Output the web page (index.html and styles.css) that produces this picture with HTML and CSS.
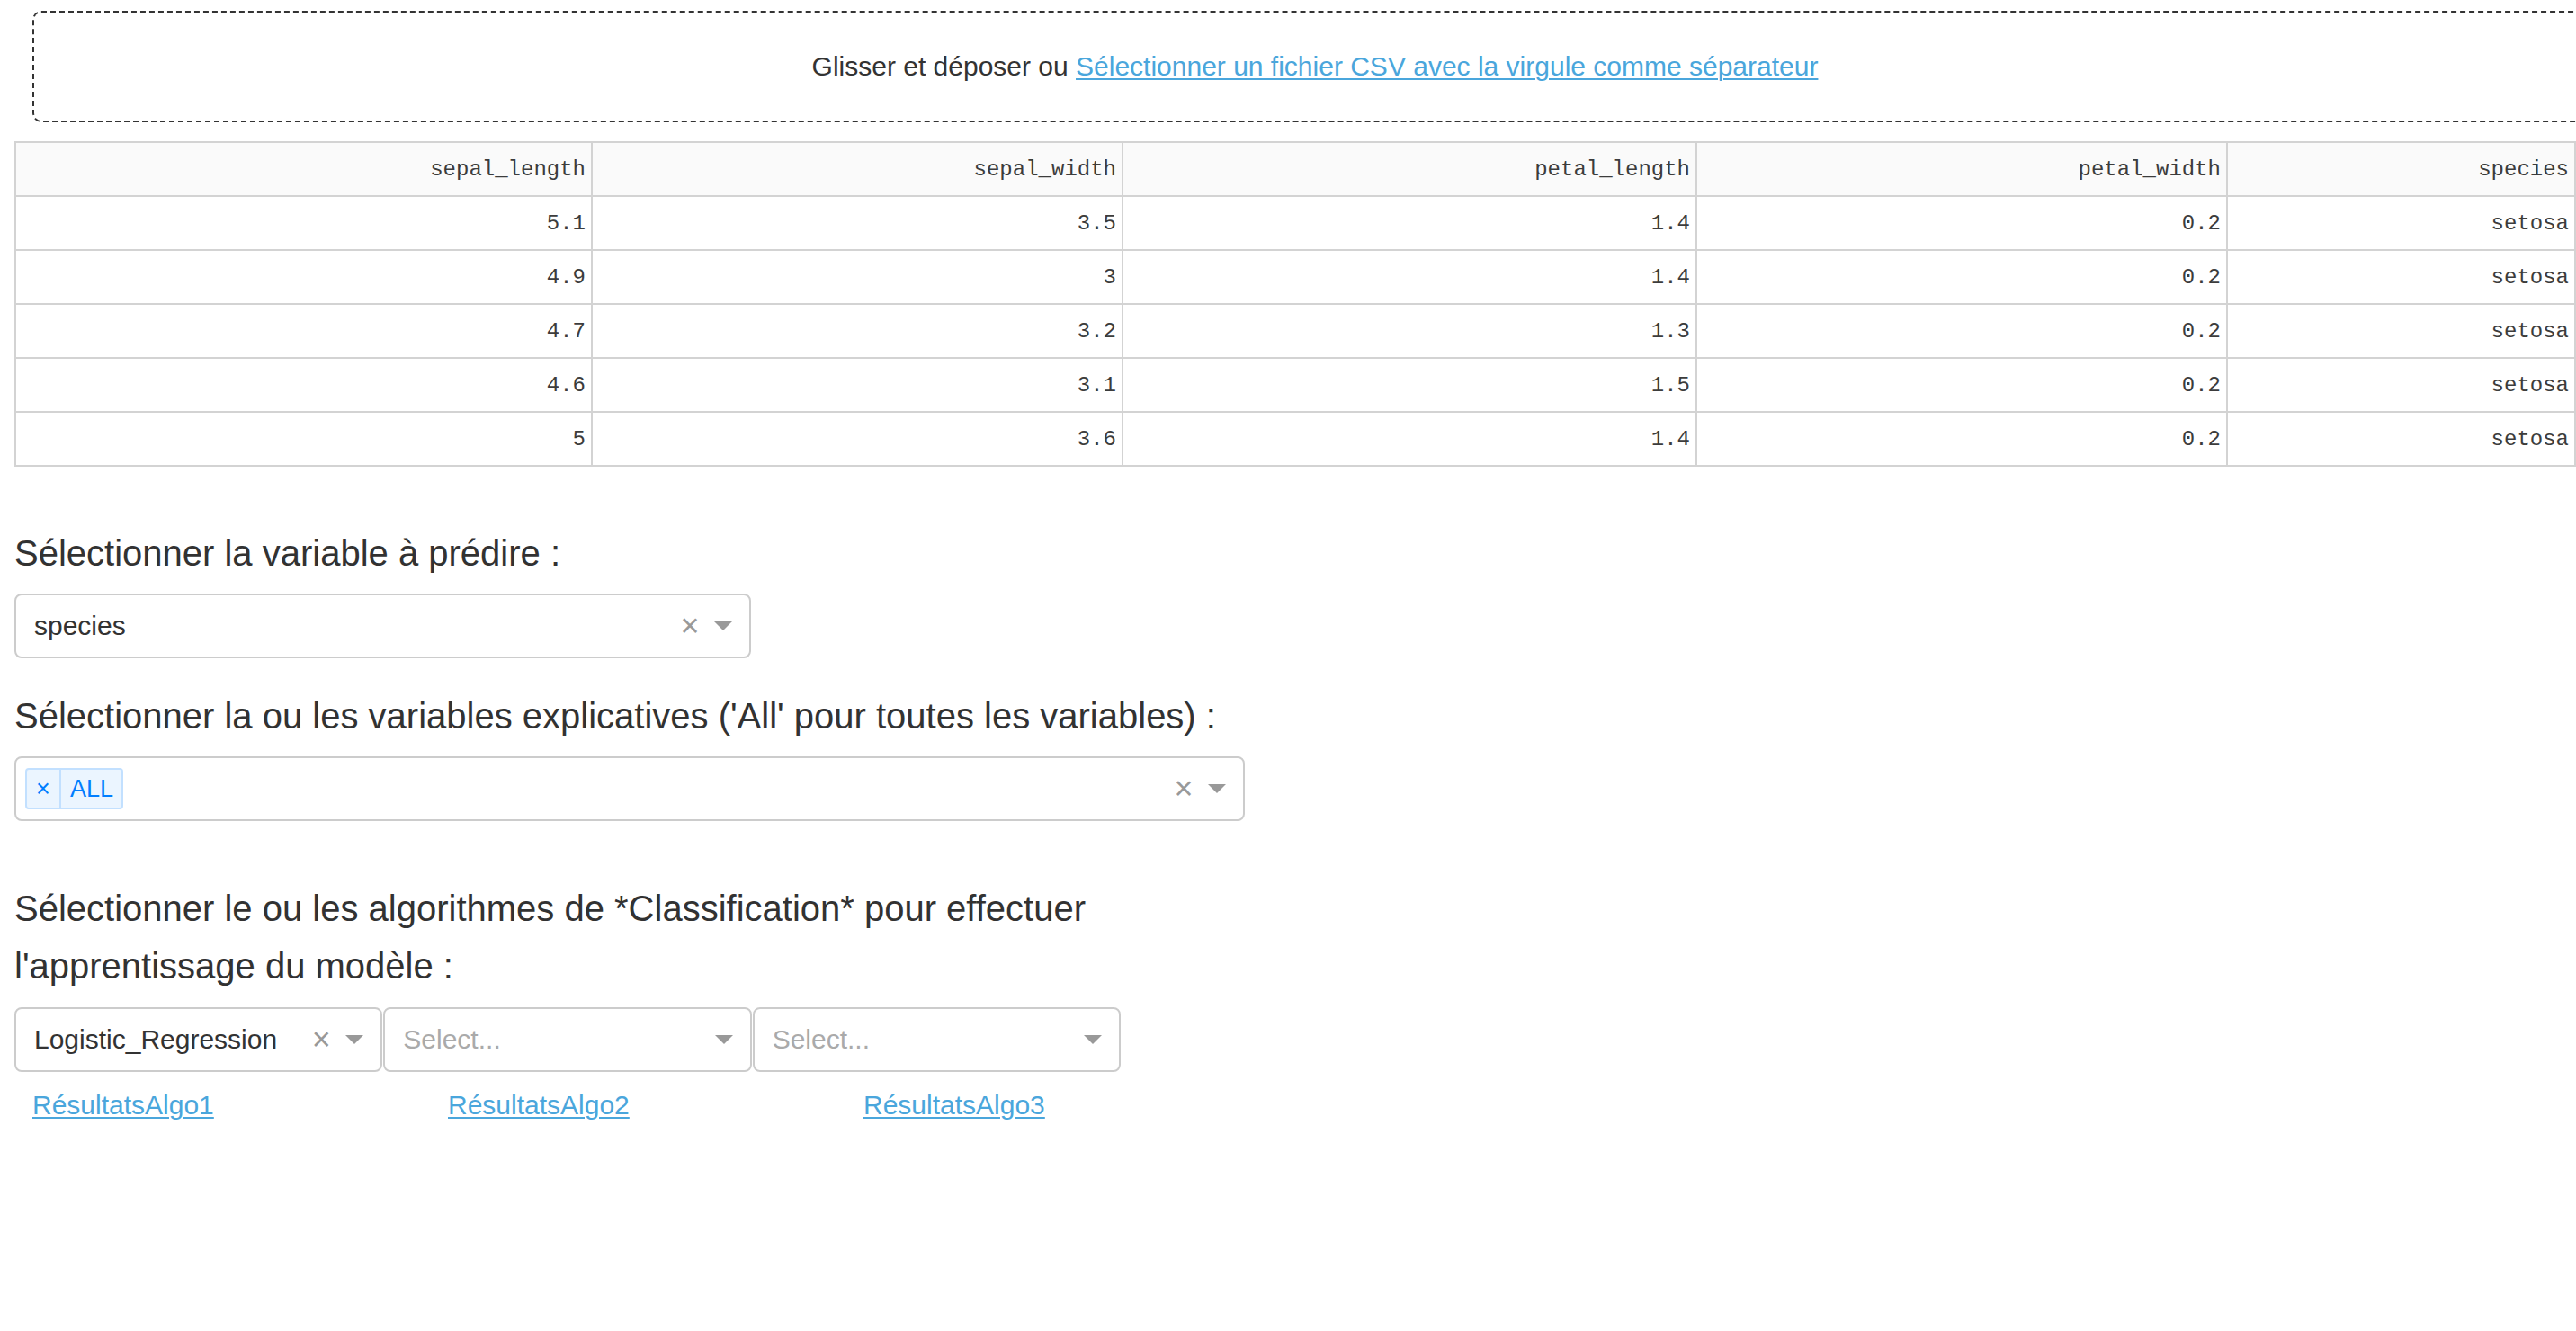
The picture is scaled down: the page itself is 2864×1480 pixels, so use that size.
FILE: index.html
```html
<!DOCTYPE html>
<html lang="fr">
<head>
<meta charset="utf-8">
<title>Classification</title>
<link rel="stylesheet" href="styles.css">
</head>
<body>
<div class="page">
  <div class="upload">Glisser et déposer ou <a class="link" href="#">Sélectionner un fichier CSV avec la virgule comme séparateur</a></div>

  <table class="data">
    <colgroup>
      <col class="c1"><col class="c2"><col class="c3"><col class="c4"><col class="c5">
    </colgroup>
    <thead>
      <tr><th>sepal_length</th><th>sepal_width</th><th>petal_length</th><th>petal_width</th><th>species</th></tr>
    </thead>
    <tbody>
      <tr><td>5.1</td><td>3.5</td><td>1.4</td><td>0.2</td><td>setosa</td></tr>
      <tr><td>4.9</td><td>3</td><td>1.4</td><td>0.2</td><td>setosa</td></tr>
      <tr><td>4.7</td><td>3.2</td><td>1.3</td><td>0.2</td><td>setosa</td></tr>
      <tr><td>4.6</td><td>3.1</td><td>1.5</td><td>0.2</td><td>setosa</td></tr>
      <tr><td>5</td><td>3.6</td><td>1.4</td><td>0.2</td><td>setosa</td></tr>
    </tbody>
  </table>

  <div class="label label-first">Sélectionner la variable à prédire :</div>
  <div class="select select-target">
    <div class="select-value">species</div>
    <span class="select-clear">×</span>
    <span class="select-arrow-zone"><span class="select-arrow"></span></span>
  </div>

  <div class="label label-second">Sélectionner la ou les variables explicatives ('All' pour toutes les variables) :</div>
  <div class="select select-multi">
    <div class="select-value">
      <span class="tag"><span class="tag-icon">×</span><span class="tag-label">ALL</span></span>
    </div>
    <span class="select-clear">×</span>
    <span class="select-arrow-zone"><span class="select-arrow"></span></span>
  </div>

  <div class="label label-third">Sélectionner le ou les algorithmes de *Classification* pour effectuer l'apprentissage du modèle :</div>
  <div class="algo-row">
    <div class="select select-algo">
      <div class="select-value">Logistic_Regression</div>
      <span class="select-clear">×</span>
      <span class="select-arrow-zone"><span class="select-arrow"></span></span>
    </div>
    <div class="select select-algo">
      <div class="select-value placeholder">Select...</div>
      <span class="select-arrow-zone"><span class="select-arrow"></span></span>
    </div>
    <div class="select select-algo">
      <div class="select-value placeholder">Select...</div>
      <span class="select-arrow-zone"><span class="select-arrow"></span></span>
    </div>
  </div>

  <div class="links-row">
    <div class="link-cell"><a class="link" href="#">RésultatsAlgo1</a></div>
    <div class="link-cell"><a class="link" href="#">RésultatsAlgo2</a></div>
    <div class="link-cell"><a class="link" href="#">RésultatsAlgo3</a></div>
  </div>
</div>
</body>
</html>
```

FILE: styles.css
```css
html {
  overflow: hidden;
}

body {
  margin: 0;
  background: #ffffff;
  font-family: "Liberation Sans", Arial, Helvetica, sans-serif;
  color: #323232;
}

.page {
  padding: 0 16px;
}

.upload {
  box-sizing: content-box;
  width: calc(100% + 16px);
  height: 120px;
  line-height: 120px;
  margin: 12px 0 21px 20px;
  border: 2px dashed #333333;
  border-radius: 10px;
  text-align: center;
  font-size: 30px;
  color: #333333;
  white-space: nowrap;
}

.link {
  color: #4aa6dc;
  text-decoration: underline;
  text-decoration-thickness: 2px;
  text-underline-offset: 3px;
}

.data {
  border-collapse: collapse;
  width: 2846px;
  table-layout: fixed;
  font-family: "Liberation Mono", "Courier New", monospace;
  font-size: 24px;
  color: #3c3c3c;
}

.c1 { width: 641px; }
.c2 { width: 590px; }
.c3 { width: 638px; }
.c4 { width: 590px; }
.c5 { width: 387px; }

.data th,
.data td {
  height: 58px;
  padding: 0 6px;
  border: 2px solid #d3d3d3;
  text-align: right;
  font-weight: normal;
  vertical-align: middle;
  white-space: nowrap;
}

.data th {
  background: #fafafa;
}

.label {
  font-size: 40px;
  line-height: 64px;
  color: #323232;
}

.label-first {
  margin-top: 64px;
}

.label-second {
  margin-top: 32px;
}

.label-third {
  margin-top: 65px;
  width: 1230px;
}

.select {
  box-sizing: border-box;
  display: flex;
  align-items: center;
  height: 72px;
  border: 2px solid #cccccc;
  border-radius: 8px;
  background: #ffffff;
  font-size: 30px;
  color: #333333;
}

.select-target {
  width: 819px;
  margin-top: 13px;
  padding-left: 20px;
}

.select-multi {
  width: 1368px;
  margin-top: 13px;
  padding-left: 10px;
}

.select-value {
  flex: 1;
  white-space: nowrap;
  overflow: hidden;
}

.placeholder {
  color: #aaaaaa;
}

.select-clear {
  width: 34px;
  text-align: center;
  font-size: 36px;
  color: #999999;
  line-height: 1;
}

.select-arrow-zone {
  width: 40px;
  margin-right: 9px;
  display: flex;
  justify-content: center;
  align-items: center;
}

.select-arrow {
  width: 0;
  height: 0;
  border-style: solid;
  border-width: 10px 10px 0 10px;
  border-color: #999999 transparent transparent transparent;
}

.tag {
  box-sizing: border-box;
  display: inline-flex;
  align-items: stretch;
  height: 46px;
  border: 2px solid #c2e0ff;
  border-radius: 4px;
  background: #ebf5ff;
  color: #007eff;
  font-size: 27px;
  vertical-align: middle;
}

.tag-icon {
  display: flex;
  align-items: center;
  justify-content: center;
  width: 36px;
  border-right: 2px solid #c2e0ff;
  font-size: 27px;
}

.tag-label {
  display: flex;
  align-items: center;
  padding: 0 9px 0 10px;
}

.algo-row {
  display: flex;
  width: 1230px;
  margin-top: 14px;
  gap: 1px;
}

.select-algo {
  width: 410px;
  padding-left: 20px;
}

.links-row {
  display: flex;
  margin-top: 13px;
  font-size: 30px;
  line-height: 48px;
}

.link-cell {
  width: 442px;
  padding-left: 20px;
}
```
